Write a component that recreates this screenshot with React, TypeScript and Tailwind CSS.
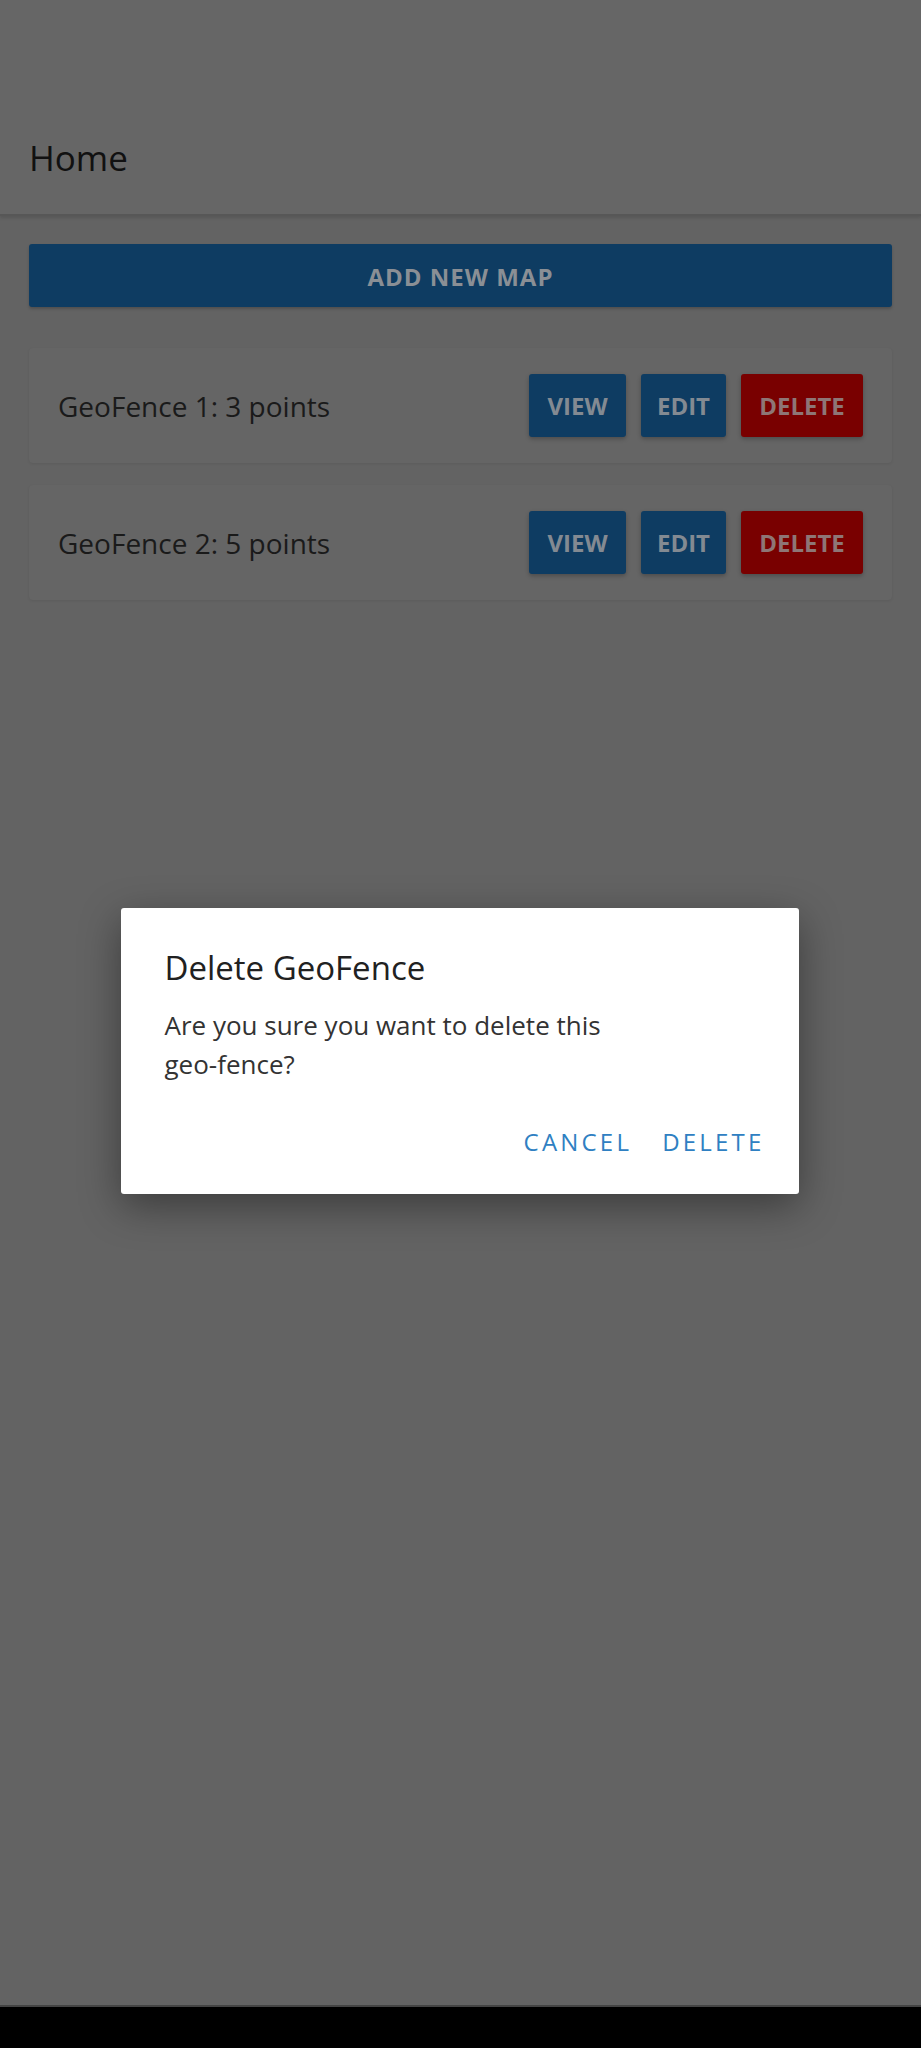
const fences = [
  { id: 1, name: "GeoFence 1", points: 3 },
  { id: 2, name: "GeoFence 2", points: 5 },
];

const font = { fontFamily: '"Open Sans", "Liberation Sans", sans-serif' };

export default function App() {
  return (
    <div className="relative flex h-[2048px] w-full flex-col bg-[#636363]" style={font}>
      <header className="flex h-[216px] shrink-0 items-end border-b-2 border-[#575757] bg-[#666666] px-[29px] pb-[39px] shadow-[0_2px_3px_rgba(0,0,0,0.12)]">
        <h1 className="text-[35px] leading-none text-[#111111]">Home</h1>
      </header>

      <main className="flex flex-1 flex-col gap-[22px] px-[29px] pt-[28px]">
        <button className="mb-[19px] h-[63px] w-full rounded-[3px] bg-[#0e3c62] pt-[2px] text-[24px] font-bold tracking-[1px] text-[#8a8f95] shadow-[0_2px_3px_rgba(0,0,0,0.2)]">
          ADD NEW MAP
        </button>

        {fences.map((f) => (
          <div
            key={f.id}
            className="flex h-[115px] items-center justify-between rounded-[4px] bg-[#656565] pl-[29px] pr-[29px] shadow-[0_1px_3px_rgba(0,0,0,0.08)]"
          >
            <span className="text-[28px] text-[#1a1a1a]">
              {f.name}: {f.points} points
            </span>
            <div className="flex gap-[15px]">
              <button className="h-[63px] w-[97px] rounded-[3px] bg-[#0e3c62] text-[24px] font-bold text-[#838a92] shadow-[0_2px_4px_rgba(0,0,0,0.25)]">
                VIEW
              </button>
              <button className="h-[63px] w-[85px] rounded-[3px] bg-[#0e3c62] text-[24px] font-bold text-[#838a92] shadow-[0_2px_4px_rgba(0,0,0,0.25)]">
                EDIT
              </button>
              <button className="h-[63px] w-[122px] rounded-[3px] bg-[#790000] text-[24px] font-bold text-[#8e7676] shadow-[0_2px_4px_rgba(0,0,0,0.25)]">
                DELETE
              </button>
            </div>
          </div>
        ))}
      </main>

      <div className="h-[43px] shrink-0 border-t-2 border-[#444444] bg-black" />

      <div className="absolute inset-x-0 top-[908px] flex justify-center">
        <div className="ml-[-2px] flex h-[286px] w-[678px] flex-col rounded-[3px] bg-white px-[44px] pt-[40px] shadow-[0_12px_40px_rgba(0,0,0,0.4)]">
          <h2 className="text-[33px] leading-[40px] text-[#212121]">Delete GeoFence</h2>
          <p className="mt-[18px] w-[490px] text-[26px] leading-[39px] text-[#333333]">
            Are you sure you want to delete this geo-fence?
          </p>
          <div className="mt-auto mb-[34px] mr-[-10px] flex justify-end gap-[30px]">
            <button className="text-[24px] font-medium tracking-[3.2px] text-[#2f80c2]">CANCEL</button>
            <button className="text-[24px] font-medium tracking-[3.2px] text-[#2f80c2]">DELETE</button>
          </div>
        </div>
      </div>
    </div>
  );
}
